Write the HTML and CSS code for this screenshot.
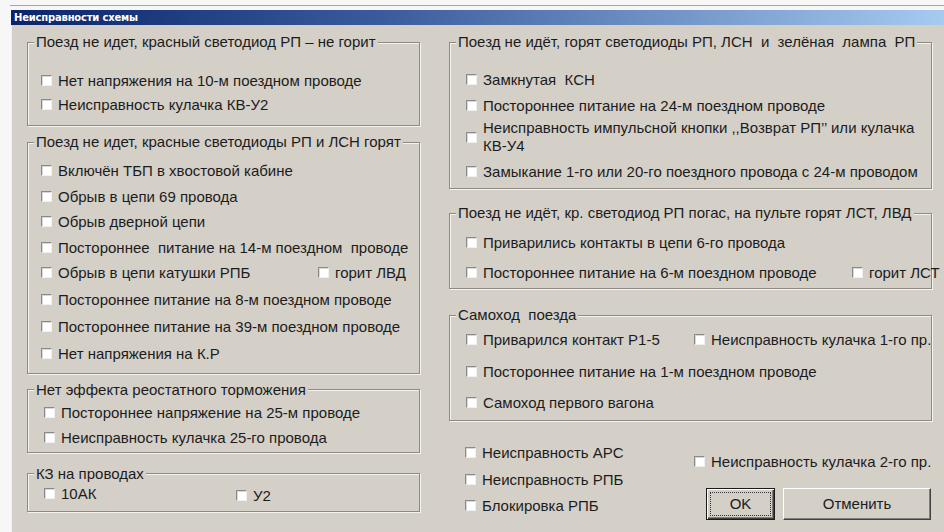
FILE: index.html
```html
<!DOCTYPE html>
<html lang="ru">
<head>
<meta charset="utf-8">
<title>Неисправности схемы</title>
<link rel="stylesheet" href="styles.css">
</head>
<body>
<div class="window">
  <div class="titlebar">Неисправности схемы</div>
  <div class="client">
    <div class="col col-left">
      <fieldset class="group g1">
        <legend>Поезд не идет, красный светодиод РП – не горит</legend>
        <label class="opt"><input type="checkbox">Нет напряжения на 10-м поездном проводе</label>
        <label class="opt"><input type="checkbox">Неисправность кулачка КВ-У2</label>
      </fieldset>

      <fieldset class="group g2">
        <legend>Поезд не идет, красные светодиоды РП и ЛСН горят</legend>
        <label class="opt"><input type="checkbox">Включён ТБП в хвостовой кабине</label>
        <label class="opt"><input type="checkbox">Обрыв в цепи 69 провода</label>
        <label class="opt"><input type="checkbox">Обрыв дверной цепи</label>
        <label class="opt"><input type="checkbox">Постороннее  питание на 14-м поездном  проводе</label>
        <div class="pair">
          <label class="opt w-rpb"><input type="checkbox">Обрыв в цепи катушки РПБ</label>
          <label class="opt opt-side"><input type="checkbox">горит ЛВД</label>
        </div>
        <label class="opt tall"><input type="checkbox">Постороннее питание на 8-м поездном проводе</label>
        <label class="opt tall"><input type="checkbox">Постороннее питание на 39-м поездном проводе</label>
        <label class="opt tall"><input type="checkbox">Нет напряжения на К.Р</label>
      </fieldset>

      <fieldset class="group g3">
        <legend>Нет эффекта реостатного торможения</legend>
        <label class="opt"><input type="checkbox">Постороннее напряжение на 25-м проводе</label>
        <label class="opt"><input type="checkbox">Неисправность кулачка 25-го провода</label>
      </fieldset>

      <fieldset class="group g4">
        <legend>КЗ на проводах</legend>
        <div class="pair">
          <label class="opt w-10ak"><input type="checkbox">10АК</label>
          <label class="opt opt-side opt-u2"><input type="checkbox">У2</label>
        </div>
      </fieldset>
    </div>

    <div class="col col-right">
      <fieldset class="group r1">
        <legend>Поезд не идёт, горят светодиоды РП, ЛСН  и  зелёная  лампа  РП</legend>
        <label class="opt"><input type="checkbox">Замкнутая  КСН</label>
        <label class="opt"><input type="checkbox">Постороннее питание на 24-м поездном проводе</label>
        <label class="opt multi"><input type="checkbox"><span>Неисправность импульсной кнопки ,,Возврат РП’’ или кулачка<br>КВ-У4</span></label>
        <label class="opt"><input type="checkbox">Замыкание 1-го или 20-го поездного провода с 24-м проводом</label>
      </fieldset>

      <fieldset class="group r2">
        <legend>Поезд не идёт, кр. светодиод РП погас, на пульте горят ЛСТ, ЛВД</legend>
        <label class="opt"><input type="checkbox">Приварились контакты в цепи 6-го провода</label>
        <div class="pair">
          <label class="opt w-6m"><input type="checkbox">Постороннее питание на 6-м поездном проводе</label>
          <label class="opt opt-side"><input type="checkbox">горит ЛСТ</label>
        </div>
      </fieldset>

      <fieldset class="group r3">
        <legend>Самоход  поезда</legend>
        <div class="pair">
          <label class="opt w-p15"><input type="checkbox">Приварился контакт Р1-5</label>
          <label class="opt opt-side"><input type="checkbox">Неисправность кулачка 1-го пр.</label>
        </div>
        <label class="opt"><input type="checkbox">Постороннее питание на 1-м поездном проводе</label>
        <label class="opt"><input type="checkbox">Самоход первого вагона</label>
      </fieldset>

      <div class="footer">
        <div class="footer-list">
          <label class="opt"><input type="checkbox">Неисправность АРС</label>
          <label class="opt"><input type="checkbox">Неисправность РПБ</label>
          <label class="opt"><input type="checkbox">Блокировка РПБ</label>
        </div>
        <div class="footer-side">
          <label class="opt"><input type="checkbox">Неисправность кулачка 2-го пр.</label>
          <div class="buttons">
            <button class="btn btn-default" type="button"><span class="focus">OK</span></button>
            <button class="btn" type="button">Отменить</button>
          </div>
        </div>
      </div>
    </div>
  </div>
</div>
</body>
</html>
```

FILE: styles.css
```css
* {
  box-sizing: border-box;
}

html,
body {
  margin: 0;
  height: 100%;
}

body {
  background: #f7f7f7;
  font-family: "Liberation Sans", Arial, sans-serif;
  font-size: 15px;
  color: #1c1c1c;
  overflow: hidden;
}

/* dialog frame */
.window {
  margin: 5px 0 0 10px;
  height: calc(100% - 5px);
  border-top: 1px solid #a4a4a4;
  padding: 4px 0 0 1px;
  display: flex;
  flex-direction: column;
}

.titlebar {
  flex: none;
  height: 15px;
  padding-left: 3px;
  background: linear-gradient(to right, #0a246a 0%, #3a5c9e 40%, #a6caf0 100%);
  color: #fff;
  font-family: "DejaVu Sans", Tahoma, sans-serif;
  font-weight: bold;
  font-size: 10px;
  line-height: 15px;
  letter-spacing: -0.2px;
}

.client {
  flex: 1;
  min-height: 0;
  overflow: hidden;
  background: #d4d0c8;
  border-left: 1px solid #f2f1ee;
  padding: 9px 0 0 15px;
  display: flex;
  gap: 29px;
}

.col {
  display: flex;
  flex-direction: column;
}

.col-left {
  width: 393px;
}

.col-right {
  width: 483px;
}

/* etched group boxes */
.group {
  margin: 0;
  padding: 0;
  border: 1px solid #8d8a84;
  box-shadow: 1px 1px 0 #f4f3f0, inset 1px 1px 0 #f4f3f0;
  display: flex;
  flex-direction: column;
  min-width: 0;
}

.group legend {
  margin-left: 6px;
  padding: 0 2px;
  line-height: 16px;
  background: #d4d0c8;
  white-space: pre;
}

.opt {
  display: flex;
  align-items: center;
  height: 25px;
  white-space: pre;
  padding-left: 13px;
}

.opt input {
  appearance: none;
  -webkit-appearance: none;
  margin: 0 6px 0 0;
  width: 11px;
  height: 11px;
  flex: none;
  background: #fff;
  border-top: 1px solid #8a8a8a;
  border-left: 1px solid #8a8a8a;
  border-right: 1px solid #f0f0f0;
  border-bottom: 1px solid #f0f0f0;
  box-shadow: inset 1px 1px 0 #d8d8d8;
}

/* left column */
.g1 {
  padding: 18px 0 9px;
}

.g1 .opt {
  height: 24px;
}

.g2 {
  margin-top: 8px;
  padding: 8px 0 6px;
}

.g2 .opt {
  height: 25.5px;
}

.g2 .opt.tall {
  height: 27px;
}

.w-rpb {
  width: 290px;
}

.g3 {
  margin-top: 8px;
  padding: 2px 0 2px;
}

.g3 .opt,
.g4 .opt {
  padding-left: 16px;
}

.g4 {
  margin-top: 13px;
  padding: 0 0 6px;
}

.g4 .opt {
  height: 18px;
}

.w-10ak {
  width: 208px;
}

/* right column */
.col-right .opt {
  padding-left: 16px;
}

.r1 {
  padding: 16px 0 4px;
}

.r1 .opt {
  height: 26px;
}

.r1 .opt.multi {
  height: 36px;
  line-height: 18px;
  margin-top: 1px;
  margin-bottom: 3px;
}

.multi span {
  white-space: normal;
}

.r2 {
  margin-top: 16px;
  padding: 6px 0 1px;
}

.r2 .opt {
  height: 30px;
}

.w-6m {
  width: 402px;
}

.r3 {
  margin-top: 18px;
  padding: 1px 0 1px;
}

.r3 .opt {
  height: 31.5px;
}

.w-p15 {
  width: 244px;
}

/* two options on one row: the first has a fixed width, the second follows it */
.pair {
  display: flex;
  align-items: center;
}

.pair > .opt:first-child {
  flex: none;
}

.pair > .opt.opt-side {
  padding-left: 0;
}

.pair > .opt.opt-u2 {
  margin-top: 5px;
}

.footer {
  display: flex;
  padding-top: 19px;
}

.footer-list {
  display: flex;
  flex-direction: column;
  width: 245px;
  flex: none;
}

.footer-list .opt {
  height: 26.5px;
}

.footer-side {
  flex: 1;
  display: flex;
  flex-direction: column;
  align-items: flex-end;
}

.footer-side .opt {
  padding-left: 0;
  height: 26px;
  margin-top: 9px;
  align-self: flex-start;
}

.buttons {
  display: flex;
  gap: 8px;
  margin-top: 13px;
  margin-right: 1px;
}

.btn {
  font-family: "Liberation Sans", Arial, sans-serif;
  font-size: 15px;
  color: #1c1c1c;
  height: 32px;
  background: #d4d0c8;
  border: 1px solid;
  border-color: #fff #404040 #404040 #fff;
  box-shadow: inset -1px -1px 0 #808080;
  padding: 0;
  width: 148px;
}

.btn-default {
  width: 69px;
  border: 1px solid #1a1a1a;
  box-shadow: inset 1px 1px 0 #fff, inset -1px -1px 0 #404040, inset -2px -2px 0 #808080;
  padding: 3px;
}

.btn-default .focus {
  display: flex;
  align-items: center;
  justify-content: center;
  height: 100%;
  border: 1px dotted #333;
}
```
